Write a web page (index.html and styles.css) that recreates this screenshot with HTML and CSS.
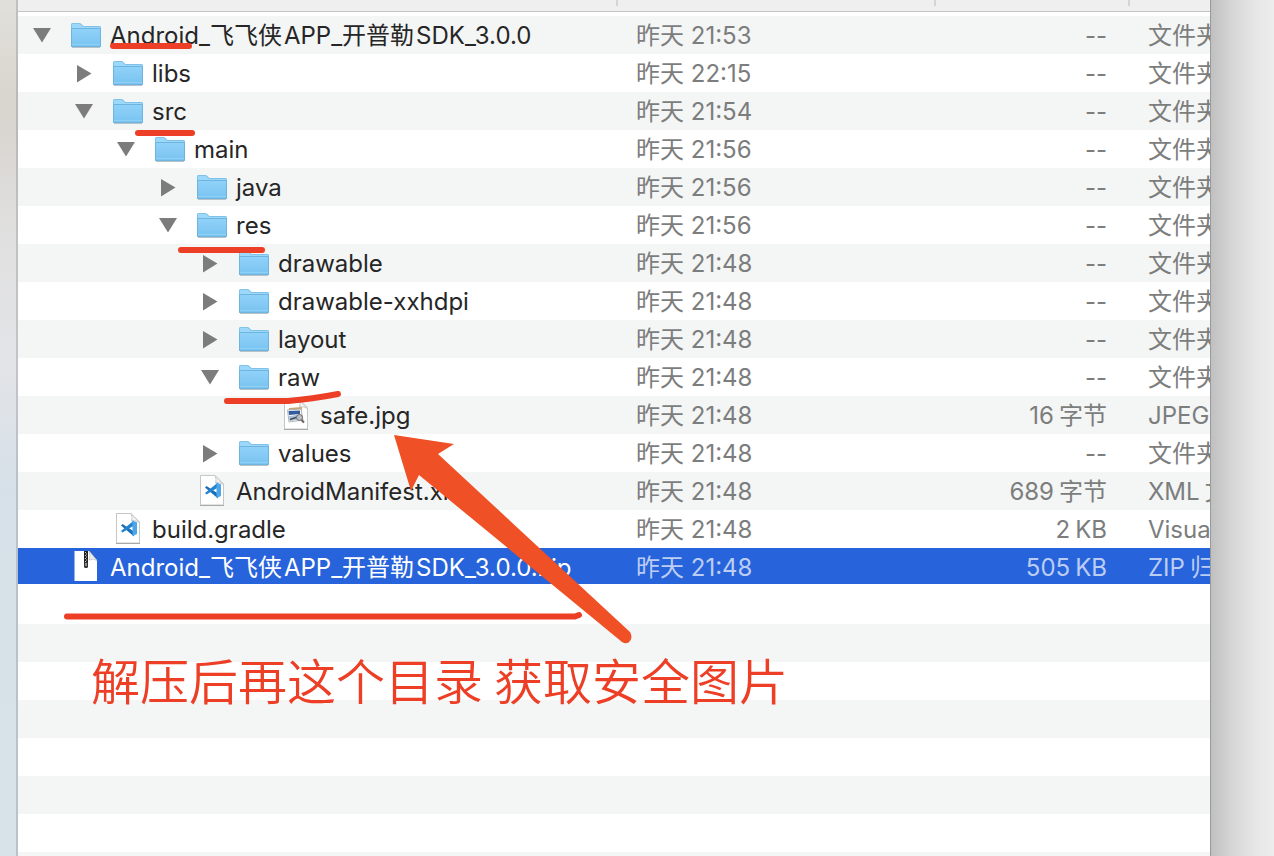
FILE: index.html
```
<!DOCTYPE html>
<html lang="zh-CN">
<head>
<meta charset="utf-8">
<title>Finder</title>
<link rel="stylesheet" href="styles.css">
</head>
<body>
<svg class="defs" aria-hidden="true">
  <defs>
    <linearGradient id="blue" x1="0" y1="0" x2="0" y2="1"><stop offset="0" stop-color="#90d2f9"/><stop offset="1" stop-color="#79c3f1"/></linearGradient>
    <symbol id="folder" viewBox="0 0 30 26">
      <path d="M0 2Q0 0 1.500 0H8.500Q10 0 11 1.500L12.500 3H28.500Q30 3 30 4.500V24H0Z" fill="#9bd8f9"/>
      <path d="M.5 23V1.500Q.5.500 1.500.500H8.500Q9.500.500 10.500 2L12 3.500H28.500Q29.500 3.500 29.500 4.500V23" fill="none" stroke="#7fc1e8"/>
      <path d="M.5 5.500H29.500V23.500H.5Z" fill="url(#blue)" stroke="#6db4df"/>
      <path d="M1 21.500H29" stroke="#8fd0f5"/>
      <path d="M1 24.500H29" stroke="#b9c2c8"/>
    </symbol>
    <symbol id="open" viewBox="0 0 18 18"><path d="M0 1H18L9 15.500Z" fill="#7c7c7c"/></symbol>
    <symbol id="closed" viewBox="0 0 18 18"><path d="M2 0V17.500L16.500 8.500Z" fill="#7c7c7c"/></symbol>
    <symbol id="page" viewBox="0 0 24 31">
      <path d="M.5.500H15L23.500 9V30H.5Z" fill="#fff" stroke="#c6c6c6"/>
      <path d="M15 .5Q17 5 15.500 8Q20 7 23.500 9.500Z" fill="#f3f3f3" stroke="#c9c9c9"/>
      <path d="M0 30.500H24" stroke="#a9a9a9"/>
    </symbol>
    <symbol id="code" viewBox="0 0 24 31">
      <use href="#page"/>
      <path d="M5 12.500L6.500 11 18 18.500V23.500Z" fill="#1b6fb8"/>
      <path d="M5 18L6.500 19.500 18 12.500V7.500Z" fill="#2383cf"/>
      <path d="M16.500 7.500L21 9.500V21L16.500 23Z" fill="#4aa5ec"/>
    </symbol>
    <symbol id="image" viewBox="0 0 24 31">
      <use href="#page"/>
      <path d="M5 9L18 8V19H5Z" fill="#c9a873"/>
      <path d="M3.500 11L17 10 19 21 5 23Z" fill="#fff" stroke="#b5b5b5"/>
      <path d="M4.500 12L16 11.500V15L5 16Z" fill="#315b9d"/>
      <path d="M5 17L16 15.500 17 20.500 5.500 22Z" fill="#a9c2dd"/>
      <path d="M6 20.500L15 17.500" stroke="#454b58" stroke-width="1.500"/>
      <circle cx="15.500" cy="18.500" r="3" fill="#b9c0c8" stroke="#6f6a68"/>
      <path d="M17.500 21L20 23.500" stroke="#6b5f58" stroke-width="2"/>
    </symbol>
    <symbol id="archive" viewBox="0 0 24 31">
      <path d="M.5 0H15L23 9.500V30H.5Z" fill="#fff"/>
      <path d="M15 0Q17 5 15 9Q20 7 23 9.500Z" fill="#ececec" stroke="#bcbcbc" stroke-width=".7"/>
      <path d="M12 0V13" stroke="#222" stroke-width="4"/>
      <path d="M11.500 1V12" stroke="#ccc" stroke-width="1" stroke-dasharray="1 2"/>
      <path d="M12.500 2.500V12" stroke="#ccc" stroke-width="1" stroke-dasharray="1 2"/>
      <rect x="10" y="11" width="4" height="6" rx="1.500" fill="#333"/>
      <rect x="11.500" y="12" width="1" height="3" fill="#ddd"/>
    </symbol>
  </defs>
</svg>
<div class="desktop">
  <main class="window">
    <table class="files">
      <colgroup><col><col class="col-date"><col class="col-size"><col class="col-kind"></colgroup>
      <thead><tr><th></th><th></th><th></th><th></th></tr></thead>
      <tbody>
        <tr class="gap"><td colspan="4"></td></tr>
        <tr class="l0"><td><div class="name"><button class="toggle" aria-label="折叠"><svg><use href="#open"/></svg></button><svg class="icon"><use href="#folder"/></svg><span>Android_飞飞侠<span class="latin">APP</span>_开普勒<span class="latin">SDK</span>_3.0.0</span></div></td><td>昨天 21:53</td><td>--</td><td>文件夹</td></tr>
        <tr class="l1"><td><div class="name"><button class="toggle" aria-label="展开"><svg><use href="#closed"/></svg></button><svg class="icon"><use href="#folder"/></svg><span>libs</span></div></td><td>昨天 22:15</td><td>--</td><td>文件夹</td></tr>
        <tr class="l1"><td><div class="name"><button class="toggle" aria-label="折叠"><svg><use href="#open"/></svg></button><svg class="icon"><use href="#folder"/></svg><span>src</span></div></td><td>昨天 21:54</td><td>--</td><td>文件夹</td></tr>
        <tr class="l2"><td><div class="name"><button class="toggle" aria-label="折叠"><svg><use href="#open"/></svg></button><svg class="icon"><use href="#folder"/></svg><span>main</span></div></td><td>昨天 21:56</td><td>--</td><td>文件夹</td></tr>
        <tr class="l3"><td><div class="name"><button class="toggle" aria-label="展开"><svg><use href="#closed"/></svg></button><svg class="icon"><use href="#folder"/></svg><span>java</span></div></td><td>昨天 21:56</td><td>--</td><td>文件夹</td></tr>
        <tr class="l3"><td><div class="name"><button class="toggle" aria-label="折叠"><svg><use href="#open"/></svg></button><svg class="icon"><use href="#folder"/></svg><span>res</span></div></td><td>昨天 21:56</td><td>--</td><td>文件夹</td></tr>
        <tr class="l4"><td><div class="name"><button class="toggle" aria-label="展开"><svg><use href="#closed"/></svg></button><svg class="icon"><use href="#folder"/></svg><span>drawable</span></div></td><td>昨天 21:48</td><td>--</td><td>文件夹</td></tr>
        <tr class="l4"><td><div class="name"><button class="toggle" aria-label="展开"><svg><use href="#closed"/></svg></button><svg class="icon"><use href="#folder"/></svg><span>drawable-xxhdpi</span></div></td><td>昨天 21:48</td><td>--</td><td>文件夹</td></tr>
        <tr class="l4"><td><div class="name"><button class="toggle" aria-label="展开"><svg><use href="#closed"/></svg></button><svg class="icon"><use href="#folder"/></svg><span>layout</span></div></td><td>昨天 21:48</td><td>--</td><td>文件夹</td></tr>
        <tr class="l4"><td><div class="name"><button class="toggle" aria-label="折叠"><svg><use href="#open"/></svg></button><svg class="icon"><use href="#folder"/></svg><span>raw</span></div></td><td>昨天 21:48</td><td>--</td><td>文件夹</td></tr>
        <tr class="l5"><td><div class="name"><i class="toggle"></i><svg class="icon doc"><use href="#image"/></svg><span>safe.jpg</span></div></td><td>昨天 21:48</td><td>16<i class="thin"></i>字节</td><td>JPEG</td></tr>
        <tr class="l4"><td><div class="name"><button class="toggle" aria-label="展开"><svg><use href="#closed"/></svg></button><svg class="icon"><use href="#folder"/></svg><span>values</span></div></td><td>昨天 21:48</td><td>--</td><td>文件夹</td></tr>
        <tr class="l3"><td><div class="name"><i class="toggle"></i><svg class="icon doc"><use href="#code"/></svg><span>AndroidManifest.xml</span></div></td><td>昨天 21:48</td><td>689<i class="thin"></i>字节</td><td>XML<i class="thin"></i>文</td></tr>
        <tr class="l1"><td><div class="name"><i class="toggle"></i><svg class="icon doc"><use href="#code"/></svg><span>build.gradle</span></div></td><td>昨天 21:48</td><td>2<i class="thin"></i>KB</td><td>Visual</td></tr>
        <tr class="l0 selected"><td><div class="name"><i class="toggle"></i><svg class="icon doc"><use href="#archive"/></svg><span>Android_飞飞侠<span class="latin">APP</span>_开普勒<span class="latin">SDK</span>_3.0.0.zip</span></div></td><td>昨天 21:48</td><td>505<i class="thin"></i>KB</td><td>ZIP<i class="thin"></i>归</td></tr>
      </tbody>
    </table>
    <div class="empty"></div>
  </main>
  <svg class="marks" viewBox="0 0 1274 856" aria-hidden="true">
    <g fill="none" stroke="#ec3f25" stroke-width="6" stroke-linecap="round" stroke-linejoin="round">
      <path d="M113 46H189"/>
      <path d="M138 133H192"/>
      <path d="M181 250H262"/>
      <path d="M227 401H288Q312 399 338 394"/>
      <path d="M67 616.500H575L579 615"/>
    </g>
    <path d="M394 435L454 444 438 454 630 632Q633 637 630 641T622 642L419 475 411 491Z" fill="#ef5026"/>
  </svg>
  <p class="note">解压后再这个目录 获取安全图片</p>
</div>
</body>
</html>
```
FILE: styles.css
```
body {
  margin: 0;
  font-family: Inter, "Noto Sans CJK SC", sans-serif;
  font-size: 24px;
  line-height: 36px;
  color: #262626;
}
.defs { position: absolute; width: 0; height: 0; }
.desktop {
  position: relative;
  box-sizing: border-box;
  min-height: 100vh;
  display: flex;
  overflow: hidden;
  padding: 0 64px 0 16px;
  background:
    linear-gradient(90deg, #999, #999) right 63px top / 1px 100% no-repeat,
    linear-gradient(90deg, #bfbfbf, #d6d6d6 35%, #e6e6e6 70%, #ededed) right top / 64px 100% no-repeat,
    linear-gradient(#e1e0da, #d8d4ce 13%, #e0e0e0 28%, #e3e4e7 42%, #d6e0e8 57%, #d8e3e9);
}
.window {
  flex: 1;
  min-width: 0;
  display: flex;
  flex-direction: column;
  border-left: 2px solid rgba(100, 100, 110, .25);
  background: #fff;
  background-clip: padding-box;
  overflow: hidden;
}
.files { width: 100%; table-layout: fixed; border-collapse: collapse; }
.col-date { width: 318px; }
.col-size { width: 194px; }
.col-kind { width: 82px; }
th {
  height: 12px;
  padding: 0;
  box-sizing: border-box;
  background:
    linear-gradient(#d4d4d4, #d4d4d4) left top / 2px 6px no-repeat,
    linear-gradient(#c6c6c6, #c6c6c6) left bottom / 100% 1px no-repeat,
    #efefef;
}
th:first-child {
  background: linear-gradient(#c6c6c6, #c6c6c6) left bottom / 100% 1px no-repeat, #efefef;
}
td {
  height: 36px;
  padding: 2px 0 0 20px;
  white-space: nowrap;
  overflow: hidden;
  color: #7c7d7d;
}
td:first-child { padding: 2px 0 0; color: inherit; }
td:nth-child(3) { padding: 2px 21px 0 0; text-align: right; }
.gap td:first-child { height: 4px; padding: 0; }
tr:nth-child(even) { background: #f4f5f5; }
.name { display: flex; align-items: center; height: 36px; padding-left: 15px; }
.l1 .name { padding-left: 57px; }
.l2 .name { padding-left: 99px; }
.l3 .name { padding-left: 141px; }
.l4 .name { padding-left: 183px; }
.l5 .name { padding-left: 225px; }
.toggle { flex: none; width: 18px; height: 18px; margin: 0 20px 0 0; padding: 0; border: 0; background: none; }
.toggle svg { display: block; width: 18px; height: 18px; }
.icon { flex: none; width: 30px; height: 26px; margin-right: 9px; }
.doc { height: 31px; margin-bottom: 3px; }
.thin { display: inline-block; width: 5px; }
.latin { margin-left: 2px; }
.files .selected { background: linear-gradient(#2763da, #2763da) left top / 100% 36px no-repeat #fff; }
.selected td { color: #bccdf4; }
.selected td:first-child { color: #fff; }
.empty { flex: 1; background: repeating-linear-gradient(#fff 0 38px, #f4f5f5 38px 76px); }
.marks { position: absolute; left: 0; top: 0; width: 1274px; height: 856px; pointer-events: none; }
.note {
  position: absolute;
  left: 91px;
  top: 643px;
  margin: 0;
  font: 350 49px/72px "Noto Sans CJK SC", sans-serif;
  color: #ec3f25;
  white-space: nowrap;
}
```
